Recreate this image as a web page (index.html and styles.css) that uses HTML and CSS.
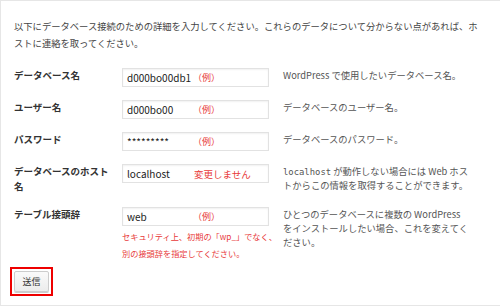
FILE: index.html
```html
<!DOCTYPE html>
<html lang="ja">
<head>
  <meta charset="UTF-8" />
  <meta name="viewport" content="width=device-width, initial-scale=1" />
  <title>データベース接続</title>
  <link rel="stylesheet" href="styles.css">
</head>
<body>

<div class="setup">
  <p class="intro">以下にデータベース接続のための詳細を入力してください。これらのデータについて分からない点があれば、ホストに連絡を取ってください。</p>

  <div class="form-table">
    <div class="row">
      <div class="label">データベース名</div>
      <div class="field">
        <div class="input"><span class="value">d000bo00db1</span><span class="hint">（例）</span></div>
      </div>
      <div class="desc">WordPress で使用したいデータベース名。</div>
    </div>

    <div class="row">
      <div class="label">ユーザー名</div>
      <div class="field">
        <div class="input"><span class="value">d000bo00</span><span class="hint">（例）</span></div>
      </div>
      <div class="desc">データベースのユーザー名。</div>
    </div>

    <div class="row">
      <div class="label">パスワード</div>
      <div class="field">
        <div class="input"><span class="value">*********</span><span class="hint">（例）</span></div>
      </div>
      <div class="desc">データベースのパスワード。</div>
    </div>

    <div class="row">
      <div class="label">データベースのホスト名</div>
      <div class="field">
        <div class="input"><span class="value">localhost</span><span class="hint hint-wide">変更しません</span></div>
      </div>
      <div class="desc"><code>localhost</code> が動作しない場合には Web ホストからこの情報を取得することができます。</div>
    </div>

    <div class="row">
      <div class="label">テーブル接頭辞</div>
      <div class="field">
        <div class="input"><span class="value">web</span><span class="hint">（例）</span></div>
        <p class="note">セキュリティ上、初期の「wp_」でなく、<br>別の接頭辞を指定してください。</p>
      </div>
      <div class="desc">ひとつのデータベースに複数の WordPress をインストールしたい場合、これを変えてください。</div>
    </div>
  </div>

  <div class="submit">
    <span class="mark"><button type="button">送信</button></span>
  </div>
</div>

</body>
</html>
```

FILE: styles.css
```css
body {
  margin: 0;
  background: #fff;
  font-family: "Noto Sans CJK JP", "Noto Sans", sans-serif;
  color: #444;
}

.setup {
  height: 306px;
  box-sizing: border-box;
  overflow: hidden;
  border-top: 1px solid #e6e6e6;
  border-left: 1px solid #e6e6e6;
  border-bottom: 1px solid #e6e6e6;
  padding: 17px 12px 0 13px;
}

.intro {
  margin: 0 6px 16px 0;
  font-size: 9.3px;
  line-height: 17px;
  color: #444;
}

.form-table {
  display: flex;
  flex-direction: column;
  gap: 13px;
}

.row {
  display: grid;
  grid-template-columns: 108px 147px 1fr;
  align-items: start;
}

.label {
  font-size: 9.5px;
  font-weight: bold;
  line-height: 15px;
  color: #333;
  padding-right: 8px;
}

.input {
  position: relative;
  height: 19px;
  box-sizing: border-box;
  border: 1px solid #e2e2e2;
  box-shadow: inset 0 1px 2px rgba(0, 0, 0, 0.06);
  display: flex;
  align-items: center;
  padding-left: 4px;
  font-size: 10px;
  color: #222;
}

.hint {
  position: absolute;
  left: 70px;
  top: 2px;
  font-size: 9px;
  color: #e83a3a;
}

.hint-wide {
  left: 71px;
  font-size: 9.5px;
}

.note {
  margin: 2px -20px 0 0;
  font-size: 8.2px;
  line-height: 17px;
  white-space: nowrap;
  color: #e83a3a;
}

.desc {
  font-size: 9.3px;
  line-height: 14px;
  color: #555;
  padding: 0 18px 0 14px;
}

.desc code {
  font-family: "DejaVu Sans Mono", monospace;
  font-size: 8.9px;
  line-height: 1;
}

.submit {
  margin-top: 4px;
}

.mark {
  display: inline-block;
  margin-left: -4px;
  border: 2px solid #e00;
  padding: 2px;
}

.mark button {
  display: block;
  width: 35px;
  height: 21px;
  padding: 0;
  border: 1px solid #ccc;
  border-radius: 2px;
  background: linear-gradient(#fafafa, #ececec);
  box-shadow: 0 1px 0 #ccc;
  font-family: inherit;
  font-size: 9px;
  color: #333;
}
```
